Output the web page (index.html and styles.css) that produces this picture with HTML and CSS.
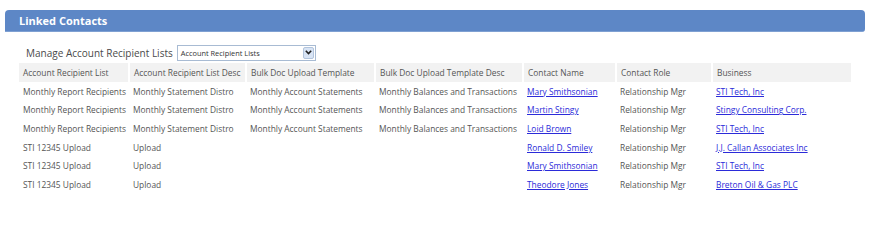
FILE: index.html
```html
<!DOCTYPE html>
<html lang="en">
<head>
    <meta charset="UTF-8">
    <title>Linked Contacts</title>
    <link rel="stylesheet" href="styles.css">
</head>
<body>

    <div class="panel">
        <div class="panel-title">Linked Contacts</div>

        <div class="manage-row">
            <label for="recipientLists">Manage Account Recipient Lists</label>
            <div class="select-box" id="recipientLists">
                <span>Account Recipient Lists</span>
                <span class="select-arrow">
                    <svg width="7" height="5" viewBox="0 0 7 5"><path d="M0.8 0.8 L3.5 3.6 L6.2 0.8" fill="none" stroke="#222" stroke-width="1.6"/></svg>
                </span>
            </div>
        </div>

        <table class="contacts">
            <colgroup>
                <col style="width:110px"><col style="width:117px"><col style="width:129px"><col style="width:148px">
                <col style="width:93px"><col style="width:96px"><col style="width:139px">
            </colgroup>
            <thead>
                <tr>
                    <th>Account Recipient List</th>
                    <th>Account Recipient List Desc</th>
                    <th>Bulk Doc Upload Template</th>
                    <th>Bulk Doc Upload Template Desc</th>
                    <th>Contact Name</th>
                    <th>Contact Role</th>
                    <th>Business</th>
                </tr>
            </thead>
            <tbody>
                <tr>
                    <td>Monthly Report Recipients</td><td>Monthly Statement Distro</td><td>Monthly Account Statements</td><td>Monthly Balances and Transactions</td>
                    <td><a href="#">Mary Smithsonian</a></td><td>Relationship Mgr</td><td><a href="#">STI Tech, Inc</a></td>
                </tr>
                <tr>
                    <td>Monthly Report Recipients</td><td>Monthly Statement Distro</td><td>Monthly Account Statements</td><td>Monthly Balances and Transactions</td>
                    <td><a href="#">Martin Stingy</a></td><td>Relationship Mgr</td><td><a href="#">Stingy Consulting Corp.</a></td>
                </tr>
                <tr>
                    <td>Monthly Report Recipients</td><td>Monthly Statement Distro</td><td>Monthly Account Statements</td><td>Monthly Balances and Transactions</td>
                    <td><a href="#">Loid Brown</a></td><td>Relationship Mgr</td><td><a href="#">STI Tech, Inc</a></td>
                </tr>
                <tr>
                    <td>STI 12345 Upload</td><td>Upload</td><td></td><td></td>
                    <td><a href="#">Ronald D. Smiley</a></td><td>Relationship Mgr</td><td><a href="#">J.J. Callan Associates Inc</a></td>
                </tr>
                <tr>
                    <td>STI 12345 Upload</td><td>Upload</td><td></td><td></td>
                    <td><a href="#">Mary Smithsonian</a></td><td>Relationship Mgr</td><td><a href="#">STI Tech, Inc</a></td>
                </tr>
                <tr>
                    <td>STI 12345 Upload</td><td>Upload</td><td></td><td></td>
                    <td><a href="#">Theodore Jones</a></td><td>Relationship Mgr</td><td><a href="#">Breton Oil &amp; Gas PLC</a></td>
                </tr>
            </tbody>
        </table>
    </div>

</body>
</html>
```

FILE: styles.css
```css
body {
    margin: 0;
    padding: 10px 6px 0 5px;
    font-family: "Open Sans", "DejaVu Sans", sans-serif;
    background-color: #fff;
    color: #555;
}
.panel-title {
    height: 21px;
    line-height: 21px;
    padding-left: 14px;
    font-size: 11px;
    font-weight: bold;
    color: #fff;
    background-color: #5d87c6;
    border-bottom: 1px solid #7fa0d2;
    border-radius: 4px 4px 3px 0;
}
.manage-row {
    display: flex;
    align-items: center;
    gap: 4px;
    margin: 12px 0 2px 21px;
    height: 17px;
}
.manage-row label {
    font-size: 10px;
    color: #4a4a4a;
}
.select-box {
    box-sizing: border-box;
    width: 139px;
    height: 16px;
    display: flex;
    align-items: center;
    justify-content: space-between;
    padding: 0 1px 0 3px;
    border: 1px solid #a8bbd3;
    font-size: 7.4px;
    color: #333;
}
.select-arrow {
    display: flex;
    align-items: center;
    justify-content: center;
    width: 11px;
    height: 12px;
    background-color: #d8e4f5;
    border: 1px solid #b2c4dc;
    border-radius: 2px;
    box-sizing: border-box;
}
.contacts {
    margin-left: 14px;
    border-collapse: collapse;
    table-layout: fixed;
    width: 832px;
    font-size: 8.4px;
}
.contacts th {
    height: 19px;
    padding: 0 4px;
    text-align: left;
    font-weight: normal;
    color: #555;
    background-color: #f2f2f2;
    border-left: 2px solid #fff;
    white-space: nowrap;
    overflow: hidden;
}
.contacts th:first-child {
    border-left: none;
}
.contacts td {
    height: 18.6px;
    padding: 0 4px;
    white-space: nowrap;
    overflow: hidden;
}
.contacts a {
    color: #2b2bd9;
}
```
